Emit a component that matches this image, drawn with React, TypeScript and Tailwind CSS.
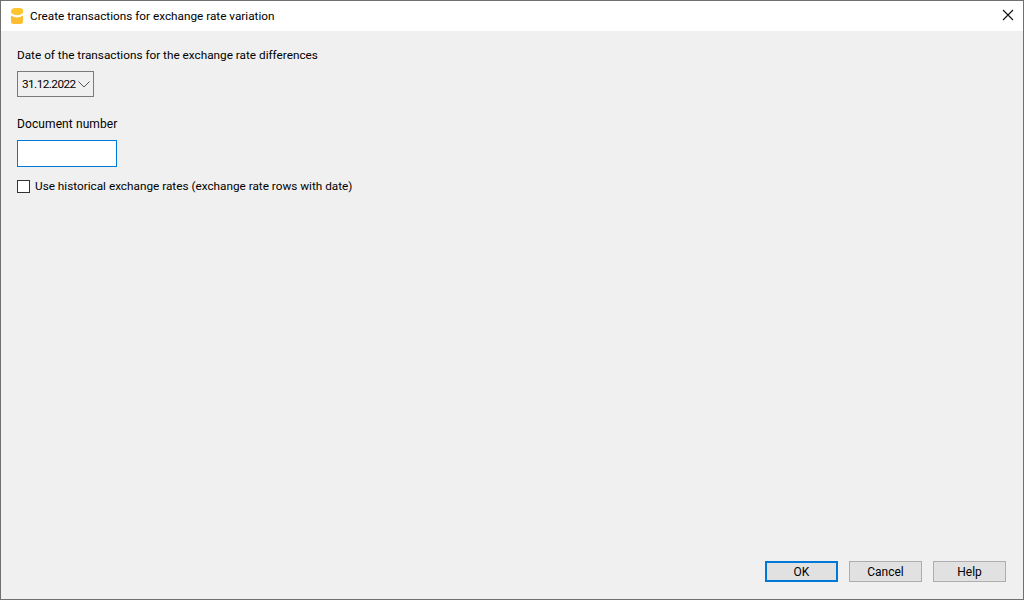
const font = "font-['Roboto','Liberation_Sans',sans-serif]";

function DialogButton({ label, primary }: { label: string; primary?: boolean }) {
  return (
    <button
      type="button"
      className={`w-[73px] h-[21px] flex items-center justify-center bg-[#e1e1e1] text-[12px] text-black ${
        primary ? 'border-2 border-[#0078d7]' : 'border border-[#adadad]'
      }`}
    >
      {label}
    </button>
  );
}

export default function App() {
  return (
    <div className={`w-[1024px] h-[600px] flex flex-col border border-[#707070] bg-[#f0f0f0] text-black ${font}`}>
      {/* Title bar */}
      <div className="h-[30px] shrink-0 bg-white flex items-center pl-[10px] pr-[9px]">
        <svg width="12" height="16" viewBox="0 0 12 16" className="shrink-0 -mt-[1px]">
          <path d="M0 3.5 Q0.5 0 4 0 L9 0 Q12 0 12 2.5 L12 5 Q6 9.5 0 5 Z" fill="#fec52e" />
          <path d="M0 7.5 Q6 11.5 12 7.5 L12 13.5 Q12 16 9 16 L3 16 Q0 16 0 13.5 Z" fill="#fdbd30" />
        </svg>
        <span className="ml-[7px] text-[11.77px] leading-[16px]">Create transactions for exchange rate variation</span>
        <svg width="12" height="12" viewBox="0 0 12 12" className="ml-auto -mt-[2px]" fill="none" stroke="#111" strokeWidth="1.1">
          <path d="M1 1 L11 11 M11 1 L1 11" />
        </svg>
      </div>

      {/* Form */}
      <div className="flex-1 flex flex-col pl-[16px] pr-[17px] pt-[16px] pb-[17px]">
        <label className="text-[11.77px] leading-[16px]">Date of the transactions for the exchange rate differences</label>
        <div className="mt-[8px] w-[77px] h-[26px] flex items-center pl-[4px] bg-[#f0f0f0] border border-[#7a7a7a] text-[11.77px]">
          <span className="whitespace-nowrap w-[56px] pt-[1px] tracking-[-0.55px]">31.12.2022</span>
          <svg width="12" height="7" viewBox="0 0 12 7" className="shrink-0" fill="none" stroke="#555555" strokeWidth="1">
            <path d="M0.5 0.5 L6 6 L11.5 0.5" />
          </svg>
        </div>

        <label className="mt-[19px] text-[12px] leading-[16px] tracking-[0.1px]">Document number</label>
        <input className="mt-[8px] w-[100px] h-[27px] bg-white border border-[#0078d7] outline-none" />

        <div className="mt-[11px] flex items-center gap-[5px]">
          <span className="w-[13px] h-[13px] bg-white border border-[#333333]" />
          <span className="text-[11.77px] leading-[16px]">Use historical exchange rates (exchange rate rows with date)</span>
        </div>

        <div className="mt-auto flex justify-end gap-[11px]">
          <DialogButton label="OK" primary />
          <DialogButton label="Cancel" />
          <DialogButton label="Help" />
        </div>
      </div>
    </div>
  );
}
